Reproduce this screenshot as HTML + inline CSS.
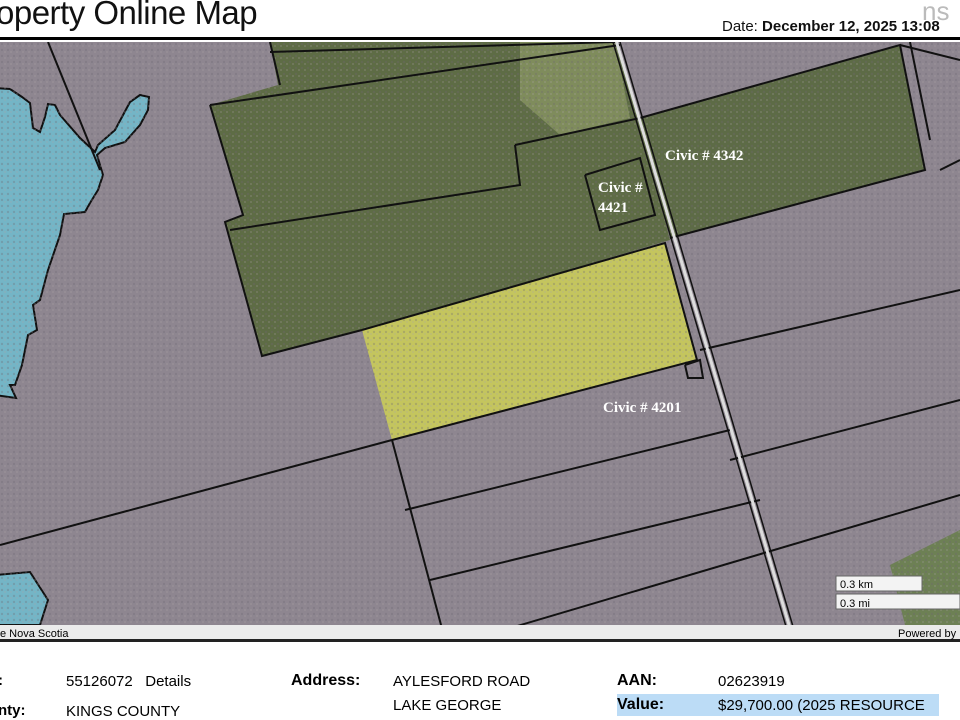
<!DOCTYPE html>
<html><head><style>
body{margin:0;width:960px;height:720px;overflow:hidden;background:#fff;font-family:"Liberation Sans",sans-serif;position:relative}
.t{position:absolute;white-space:nowrap}
</style></head><body>
<div class="t" style="left:-4px;top:-6px;font-size:33px;color:#111;letter-spacing:-0.5px">operty Online Map</div>
<div class="t" style="left:922px;top:-4px;font-size:26px;color:#bbb">ns</div>
<div class="t" style="left:722px;top:18px;font-size:15px;color:#111">Date: <b>December 12, 2025 13:08</b></div>
<div style="position:absolute;left:0;top:37px;width:960px;height:3px;background:#000"></div>
<svg style="position:absolute;left:0;top:42px" width="960" height="600" viewBox="0 42 960 600">
<defs><pattern id="n" width="6" height="6" patternUnits="userSpaceOnUse"><circle cx="2" cy="2" r="1.2" fill="#6f6870" opacity=".3"/><circle cx="5" cy="4" r="1" fill="#aaa2a8" opacity=".3"/></pattern></defs>
<rect x="0" y="42" width="960" height="600" fill="#8e8690"/>
<polygon points="270,42 615,42 640,120 670,240 365,330 262,356 225,222 243,215 210,105 278,85" fill="#5e6c45"/>
<polygon points="520,42 615,42 630,118 560,135 520,100" fill="#7f8c5c"/>
<polygon points="640,118 900,45 925,170 670,238" fill="#5d6b46"/>
<polygon points="362,330 665,243 697,360 392,440" fill="#c4c55e"/>
<polygon points="890,565 960,530 960,625 905,625" fill="#6d8054"/>
<polygon points="-5,88 10,89 22,97 30,103 33,128 40,132 45,117 48,104 55,105 60,115 80,138 95,152 98,145 115,130 130,102 140,95 149,97 148,110 140,125 125,142 105,148 97,155 100,165 103,175 98,190 90,203 85,212 64,214 60,235 48,270 40,300 33,305 37,330 28,335 22,365 15,385 10,385 16,398 -5,395" fill="#74b5c6" stroke="#111" stroke-width="2"/>
<polygon points="-5,575 30,572 48,600 40,625 -5,625" fill="#74b5c6" stroke="#111" stroke-width="2"/>
<rect x="0" y="42" width="960" height="600" fill="url(#n)"/>
<g stroke="#111" stroke-width="2" fill="none">
<polyline points="270,52 615,42"/>
<polyline points="210,105 620,45"/>
<polyline points="640,118 900,45 925,170 670,238"/>
<polyline points="515,145 640,118"/>
<polyline points="515,145 520,185 230,230"/>
<polyline points="210,105 243,215 225,222 262,356 362,330"/>
<polyline points="585,175 640,158 655,215 600,230 585,175"/>
<polyline points="362,330 665,243 697,360 392,440"/>
<polyline points="392,440 445,640"/>
<polyline points="0,545 392,440"/>
<polyline points="405,510 730,430"/>
<polyline points="430,580 760,500"/>
<polyline points="470,640 960,495"/>
<polyline points="700,350 960,290"/>
<polyline points="730,460 960,400"/>
<polyline points="48,42 100,170"/>
<polyline points="270,42 280,85"/>
<polyline points="900,45 960,60"/>
<polyline points="940,170 960,160"/>
<polyline points="910,42 930,140"/>
<polyline points="685,365 700,360 703,378 688,378 685,365"/>
</g>
<g stroke="#111" stroke-width="1.5"><line x1="613" y1="42" x2="790" y2="640"/><line x1="620" y1="42" x2="797" y2="640"/></g>
<line x1="616.5" y1="42" x2="793.5" y2="640" stroke="#ddd" stroke-width="3"/>
<rect x="836" y="576" width="86" height="15" fill="#f3f3f3" stroke="#666"/>
<rect x="836" y="594" width="124" height="15" fill="#f3f3f3" stroke="#666"/>
<text x="840" y="588" font-size="11" font-family="Liberation Sans">0.3 km</text>
<text x="840" y="607" font-size="11" font-family="Liberation Sans">0.3 mi</text>
<rect x="0" y="625" width="960" height="17" fill="#ebebeb"/>
<rect x="0" y="639" width="960" height="3" fill="#222"/>
<text x="0" y="637" font-size="11" font-family="Liberation Sans">e Nova Scotia</text>
<text x="898" y="637" font-size="11" font-family="Liberation Sans">Powered by</text>
<g font-family="Liberation Serif" font-weight="bold" fill="#fff" font-size="15">
<text x="665" y="160">Civic # 4342</text>
<text x="598" y="192">Civic #</text><text x="598" y="212">4421</text>
<text x="603" y="412">Civic # 4201</text>
</g>
</svg>
<div style="position:absolute;left:617px;top:694px;width:322px;height:22px;background:#bcdcf6"></div>
<div class="t" style="left:-2px;top:672px;font-size:15px;font-weight:bold">:</div>
<div class="t" style="left:-2px;top:702px;font-size:15px;font-weight:bold">nty:</div>
<div class="t" style="left:66px;top:673px;font-size:15px">55126072 &nbsp;&nbsp;Details</div>
<div class="t" style="left:66px;top:703px;font-size:15px">KINGS COUNTY</div>
<div class="t" style="left:291px;top:672px;font-size:16px;font-weight:bold">Address:</div>
<div class="t" style="left:393px;top:673px;font-size:15px">AYLESFORD ROAD</div>
<div class="t" style="left:393px;top:697px;font-size:15px">LAKE GEORGE</div>
<div class="t" style="left:617px;top:672px;font-size:16px;font-weight:bold">AAN:</div>
<div class="t" style="left:718px;top:673px;font-size:15px">02623919</div>
<div class="t" style="left:617px;top:696px;font-size:16px;font-weight:bold">Value:</div>
<div class="t" style="left:718px;top:697px;font-size:15px">$29,700.00 (2025 RESOURCE</div>
</body></html>
